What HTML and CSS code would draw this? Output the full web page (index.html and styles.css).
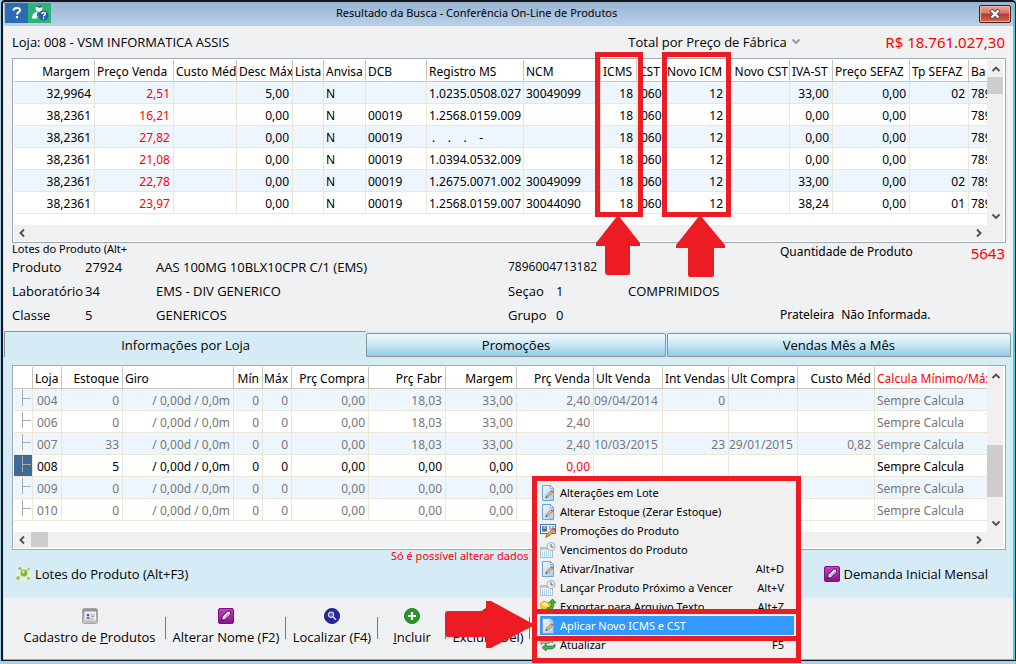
FILE: index.html
```html
<!DOCTYPE html>
<html lang="pt-BR">
<head>
<meta charset="utf-8">
<title>Resultado da Busca - Conferência On-Line de Produtos</title>
<link rel="stylesheet" href="styles.css">
</head>
<body>
<svg class="defs" aria-hidden="true">
  <defs>
    <linearGradient id="paper" x1="0" y1="0" x2="1" y2="1"><stop offset="0" stop-color="#f4faff"/><stop offset="1" stop-color="#9fcdf2"/></linearGradient>
    <linearGradient id="pink" x1="0" y1="0" x2="0" y2="1"><stop offset="0" stop-color="#c840c8"/><stop offset="1" stop-color="#8a128f"/></linearGradient>
    <linearGradient id="silver" x1="0" y1="0" x2="0" y2="1"><stop offset="0" stop-color="#8e8e8e"/><stop offset="1" stop-color="#c4c4c4"/></linearGradient>
  </defs>
  <symbol id="i-edit" viewBox="0 0 16 16">
    <path d="M2.500 .5h8l3 3v12h-11z" fill="url(#paper)" stroke="#6ea5d8"/>
    <path d="M10.500 .5v3h3z" fill="#fff" stroke="#6ea5d8" stroke-width=".8"/>
    <path d="M6 12.500l.8-2.500 4-4 1.700 1.700-4 4z" fill="#f0b878" stroke="#8a6238" stroke-width=".6"/>
    <path d="M10.800 6l1-1 1.700 1.700-1 1z" fill="#b06a5a"/><path d="M5.500 13l.6-1.800 1.200 1.200z" fill="#333"/>
  </symbol>
  <symbol id="i-promo" viewBox="0 0 16 16">
    <rect x=".5" y="1.500" width="15" height="9" fill="#eef6ff" stroke="#3b78b8"/>
    <rect x="2" y="3" width="5" height="5" fill="#4a7fc0"/><circle cx="4.500" cy="4.500" r="1.500" fill="#e8a35c"/>
    <path d="M2 8q2.500-3 5 0zM9 4h2M12 4h2M9 6h5" fill="#333" stroke="#3b78b8"/>
    <path d="M5.500 14.500l2-4 6-5 2 2-6 5z" fill="#f3a63b" stroke="#9b5a1c" stroke-width=".8"/><path d="M12.500 6l2-1.500 1.500 2-2 1.500z" fill="#d4505a"/>
  </symbol>
  <symbol id="i-cal" viewBox="0 0 16 16">
    <rect x=".5" y="5.500" width="12" height="10" fill="#f8fcff" stroke="#b3bfc8"/>
    <path d="M1 6h11v2h-11z" fill="#c0ccd4"/>
    <path d="M2 10h9M2 12h9M2 14h9" stroke="#62b8d0" stroke-dasharray="1 1"/>
    <circle cx="11" cy="4.500" r="4" fill="#eef2f4" stroke="#a3adb5"/><path d="M11 2v3h2.500" fill="none" stroke="#5c6973"/>
  </symbol>
  <symbol id="i-export" viewBox="0 0 16 16">
    <path d="M0 5l4-3 4 2 4 4-4 6-6-2z" fill="#f6c520" stroke="#c99508" stroke-width=".7"/><path d="M1 5l4-2 4 3-4 2z" fill="#fff08a"/>
    <path d="M7 9q5 0 4-5h-2.500l4-4 3.500 4h-2q0 8-7 8z" fill="#43b02a" stroke="#247a14" stroke-width=".7"/>
  </symbol>
  <symbol id="i-refresh" viewBox="0 0 16 16">
    <path d="M1 2v6l2-2q4 2 8-1l2 1V2l-4 0 1 1.500Q6 5.500 3 3z" fill="#9bcf9b" stroke="#3d8b4f" stroke-width=".8"/>
    <path d="M2 10.500l4-3.500v2h7l2-2v3l-3 2H6v2z" fill="#4caf58" stroke="#267338" stroke-width=".8"/>
  </symbol>
  <symbol id="i-tag" viewBox="0 0 16 16">
    <rect x=".5" y=".5" width="15" height="15" rx="1.500" fill="url(#pink)" stroke="#7b1180"/>
    <path d="M3.500 12.500l.8-4 5.500-5.500 2.700.2.200 2.800-5.700 5.500z" fill="#f3e6f3" stroke="#3f0a42" stroke-width=".9"/>
    <path d="M6.500 10l4.500-4.500" stroke="#9a7a9c" stroke-width=".9"/><path d="M3 13l.8-2.300 1.600 1.500z" fill="#222"/>
  </symbol>
  <symbol id="i-card" viewBox="0 0 16 16">
    <rect x=".5" y=".5" width="15" height="15" rx="2" fill="url(#silver)" stroke="#a5a5a5"/>
    <rect x="3" y="4" width="10.500" height="8" fill="#e8e8e8" stroke="#fff" stroke-width=".8"/>
    <circle cx="6" cy="7" r="1.300" fill="#2a62b8"/><path d="M4 10.500q2-3.500 4 0z" fill="#2a62b8"/><path d="M9 7h3.500M9 8.500h3.500M4 11h8" stroke="#888" stroke-width=".7"/>
  </symbol>
  <symbol id="i-find" viewBox="0 0 16 16">
    <circle cx="8" cy="8" r="7.600" fill="#25259c" stroke="#15156a" stroke-width=".8"/>
    <circle cx="7" cy="6.700" r="2.600" fill="#5a5ac0" stroke="#d8d8f4" stroke-width="1.200"/><path d="M9 8.700l3 3" stroke="#d8d8f4" stroke-width="1.600"/>
  </symbol>
  <symbol id="i-add" viewBox="0 0 16 16">
    <circle cx="8" cy="8" r="7.600" fill="#25962a" stroke="#1a7a20" stroke-width=".8"/><path d="M8 4v8M4 8h8" stroke="#fff" stroke-width="2.200"/>
  </symbol>
  <symbol id="i-del" viewBox="0 0 16 16">
    <circle cx="8" cy="8" r="7.600" fill="#b02020" stroke="#801414" stroke-width=".8"/><path d="M4 8h8" stroke="#fff" stroke-width="2.200"/>
  </symbol>
  <symbol id="i-lot" viewBox="0 0 16 16">
    <circle cx="8" cy="8" r="7.500" fill="#e9f3d8" opacity=".8"/><path d="M5 3l4 4 4-4M9 7l-6 5M9 7l4 5" stroke="#c3dba6" fill="none"/>
    <circle cx="9" cy="7" r="3.400" fill="#7cb738"/><circle cx="8.300" cy="6" r="1.400" fill="#d9efb5"/>
    <circle cx="5" cy="2.500" r="1.600" fill="#8fbf4c"/><circle cx="13.500" cy="3" r="1.200" fill="#9cc75c"/><circle cx="3" cy="12" r="1.800" fill="#8fbf4c"/><circle cx="13.500" cy="12.500" r="1.400" fill="#9cc75c"/>
  </symbol>
  <symbol id="i-up" viewBox="0 0 10 8"><path d="M1.500 6L5 2.500 8.500 6" fill="none" stroke="#505050" stroke-width="1.900"/></symbol>
  <symbol id="i-down" viewBox="0 0 10 8"><path d="M1.500 1.500L5 5l3.500-3.500" fill="none" stroke="#505050" stroke-width="1.900"/></symbol>
  <symbol id="i-left" viewBox="0 0 8 10"><path d="M5 1.500L1.500 5 5 8.500" fill="none" stroke="#505050" stroke-width="1.900"/></symbol>
  <symbol id="i-right" viewBox="0 0 8 10"><path d="M2 1.500L5.500 5 2 8.500" fill="none" stroke="#505050" stroke-width="1.900"/></symbol>
</svg>

<main class="window">
  <header class="titlebar">
    <div class="title-icons">
      <button class="help" aria-label="Ajuda">
        <svg width="10" height="14" viewBox="0 0 10 14"><path d="M1.500 4.500q0-2.500 3.300-2.500T8 4.300Q8 5.500 6.500 6.400 5 7.300 5 8.500" fill="none" stroke="#fff" stroke-width="2"/><rect x="3.900" y="10" width="2.200" height="2.200" fill="#fff"/></svg>
      </button>
      <button class="support" aria-label="Suporte">
        <svg width="18" height="16" viewBox="0 0 18 16"><circle cx="8" cy="3.500" r="3.300" fill="#fff"/><path d="M5 1.500q3 2 6 .5L10.500.5H6z" fill="#1c4f9c"/><path d="M1 13.500q0-6 5-6.500l2 1.500-2 5z" fill="#fff"/><path d="M6.500 7.500l2 .500-3 5z" fill="#1c4f9c"/><circle cx="12.500" cy="10.500" r="5" fill="#1f5fb0"/><path d="M10.800 9q0-1.500 1.800-1.500t1.700 1.400q0 .8-.9 1.300t-.8 1.300" fill="none" stroke="#fff" stroke-width="1.400"/><rect x="11.900" y="12.500" width="1.400" height="1.400" fill="#fff"/></svg>
      </button>
    </div>
    <h1>Resultado da Busca - Conferência On-Line de Produtos</h1>
    <button class="close" aria-label="Fechar">
      <svg width="12" height="10" viewBox="0 0 12 10"><path d="M2 1l8 8M10 1L2 9" stroke="#59484a" stroke-width="4.200"/><path d="M2.500 1.500l7 7M9.500 1.500l-7 7" stroke="#fff" stroke-width="2.400"/></svg>
    </button>
  </header>

  <section class="summary">
    <span class="store">Loja: 008 - VSM INFORMATICA ASSIS</span>
    <span class="picker">
      <select aria-label="Total"><option>Total por Preço de Fábrica</option></select>
      <svg width="10" height="8" viewBox="0 0 10 8"><path d="M1.500 1.500L5 5l3.500-3.500" fill="none" stroke="#999" stroke-width="1.900"/></svg>
    </span>
    <strong class="amount">R$ 18.761.027,30</strong>
  </section>

  <section class="grid">
    <div class="view">
      <table class="products">
        <colgroup><col class="w81"><col class="w79"><col class="w63"><col class="w56"><col class="w31"><col class="w42"><col class="w61"><col class="w97"><col class="w77"><col class="w36"><col class="w28"><col class="w62"><col class="w63"><col class="w43"><col class="w77"><col class="w59"><col></colgroup>
        <thead><tr><th class="n">Margem</th><th>Preço Venda</th><th>Custo Méd</th><th>Desc Máx</th><th>Lista</th><th>Anvisa</th><th>DCB</th><th>Registro MS</th><th>NCM</th><th>ICMS</th><th>CST</th><th>Novo ICM</th><th class="n">Novo CST</th><th>IVA-ST</th><th>Preço SEFAZ</th><th>Tp SEFAZ</th><th>Ba</th></tr></thead>
        <tbody>
          <tr><td class="n">32,9964</td><td class="n red">2,51</td><td></td><td class="n">5,00</td><td></td><td>N</td><td></td><td>1.0235.0508.027</td><td>30049099</td><td class="n">18</td><td>060</td><td class="n">12</td><td></td><td class="n">33,00</td><td class="n">0,00</td><td class="n">02</td><td>789</td></tr>
          <tr><td class="n">38,2361</td><td class="n red">16,21</td><td></td><td class="n">0,00</td><td></td><td>N</td><td>00019</td><td>1.2568.0159.009</td><td></td><td class="n">18</td><td>060</td><td class="n">12</td><td></td><td class="n">0,00</td><td class="n">0,00</td><td></td><td>789</td></tr>
          <tr><td class="n">38,2361</td><td class="n red">27,82</td><td></td><td class="n">0,00</td><td></td><td>N</td><td>00019</td><td class="mask"> .    .    .    -</td><td></td><td class="n">18</td><td>060</td><td class="n">12</td><td></td><td class="n">0,00</td><td class="n">0,00</td><td></td><td>789</td></tr>
          <tr><td class="n">38,2361</td><td class="n red">21,08</td><td></td><td class="n">0,00</td><td></td><td>N</td><td>00019</td><td>1.0394.0532.009</td><td></td><td class="n">18</td><td>060</td><td class="n">12</td><td></td><td class="n">0,00</td><td class="n">0,00</td><td></td><td>789</td></tr>
          <tr><td class="n">38,2361</td><td class="n red">22,78</td><td></td><td class="n">0,00</td><td></td><td>N</td><td>00019</td><td>1.2675.0071.002</td><td>30049099</td><td class="n">18</td><td>060</td><td class="n">12</td><td></td><td class="n">33,00</td><td class="n">0,00</td><td class="n">02</td><td>789</td></tr>
          <tr><td class="n">38,2361</td><td class="n red">23,97</td><td></td><td class="n">0,00</td><td></td><td>N</td><td>00019</td><td>1.2568.0159.007</td><td>30044090</td><td class="n">18</td><td>060</td><td class="n">12</td><td></td><td class="n">38,24</td><td class="n">0,00</td><td class="n">01</td><td>789</td></tr>
        </tbody>
      </table>
    </div>
    <div class="vbar"><button aria-label="Rolar para cima"><svg width="10" height="8"><use href="#i-up"/></svg></button><i class="thumb"></i><span class="fill"></span><button aria-label="Rolar para baixo"><svg width="10" height="8"><use href="#i-down"/></svg></button></div>
    <div class="hbar"><button aria-label="Rolar para a esquerda"><svg width="8" height="10"><use href="#i-left"/></svg></button><span class="fill"></span><button aria-label="Rolar para a direita"><svg width="8" height="10"><use href="#i-right"/></svg></button></div>
  </section>

  <section class="details">
    <div class="detail-main">
      <div class="hint">Lotes do Produto (Alt+</div>
      <div class="facts">
        <span>Produto</span><span>27924</span><span>AAS 100MG 10BLX10CPR C/1 (EMS)</span><span class="wide barcode">7896004713182</span>
        <span>Laboratório</span><span>34</span><span>EMS - DIV GENERICO</span><span>Seçao</span><span>1</span><span>COMPRIMIDOS</span>
        <span>Classe</span><span>5</span><span>GENERICOS</span><span>Grupo</span><span>0</span><span></span>
      </div>
    </div>
    <div class="detail-side">
      <div class="qty"><span>Quantidade de Produto</span><strong class="amount">5643</strong></div>
      <div class="shelf"><span>Prateleira</span><span>Não Informada.</span></div>
    </div>
  </section>

  <nav class="tabs" role="tablist">
    <button role="tab" aria-selected="true" class="tab active">Informações por Loja</button>
    <button role="tab" aria-selected="false" class="tab">Promoções</button>
    <button role="tab" aria-selected="false" class="tab tab-last">Vendas Mês a Mês</button>
  </nav>

  <section class="panel">
    <div class="grid">
      <div class="view">
        <table class="stores">
          <colgroup><col class="w19"><col class="w29"><col class="w61"><col class="w111"><col class="w29"><col class="w29"><col class="w77"><col class="w77"><col class="w71"><col class="w77"><col class="w69"><col class="w66"><col class="w69"><col class="w77"><col></colgroup>
          <thead><tr><th></th><th>Loja</th><th class="n">Estoque</th><th>Giro</th><th class="n">Mín</th><th class="n">Máx</th><th class="n">Prç Compra</th><th class="n">Prç Fabr</th><th class="n">Margem</th><th class="n">Prç Venda</th><th>Ult Venda</th><th class="n">Int Vendas</th><th>Ult Compra</th><th class="n">Custo Méd</th><th class="red">Calcula Mínimo/Máx</th></tr></thead>
          <tbody>
            <tr><td class="node"><i></i></td><td>004</td><td class="n">0</td><td class="n">/ 0,00d / 0,0m</td><td class="n">0</td><td class="n">0</td><td class="n">0,00</td><td class="n">18,03</td><td class="n">33,00</td><td class="n">2,40</td><td class="d">09/04/2014</td><td class="n">0</td><td></td><td></td><td>Sempre Calcula</td></tr>
            <tr><td class="node"><i></i></td><td>006</td><td class="n">0</td><td class="n">/ 0,00d / 0,0m</td><td class="n">0</td><td class="n">0</td><td class="n">0,00</td><td class="n">18,03</td><td class="n">33,00</td><td class="n">2,40</td><td></td><td></td><td></td><td></td><td>Sempre Calcula</td></tr>
            <tr><td class="node"><i></i></td><td>007</td><td class="n">33</td><td class="n">/ 0,00d / 0,0m</td><td class="n">0</td><td class="n">0</td><td class="n">0,00</td><td class="n">18,03</td><td class="n">33,00</td><td class="n">2,40</td><td class="d">10/03/2015</td><td class="n">23</td><td class="d">29/01/2015</td><td class="n">0,82</td><td>Sempre Calcula</td></tr>
            <tr class="current"><td class="node"><i></i></td><td>008</td><td class="n">5</td><td class="n">/ 0,00d / 0,0m</td><td class="n">0</td><td class="n">0</td><td class="n">0,00</td><td class="n">0,00</td><td class="n">0,00</td><td class="n red">0,00</td><td></td><td></td><td></td><td></td><td>Sempre Calcula</td></tr>
            <tr><td class="node"><i></i></td><td>009</td><td class="n">0</td><td class="n">/ 0,00d / 0,0m</td><td class="n">0</td><td class="n">0</td><td class="n">0,00</td><td class="n">0,00</td><td class="n">0,00</td><td></td><td></td><td></td><td></td><td></td><td>Sempre Calcula</td></tr>
            <tr><td class="node"><i></i></td><td>010</td><td class="n">0</td><td class="n">/ 0,00d / 0,0m</td><td class="n">0</td><td class="n">0</td><td class="n">0,00</td><td class="n">0,00</td><td class="n">0,00</td><td></td><td></td><td></td><td></td><td></td><td>Sempre Calcula</td></tr>
          </tbody>
        </table>
      </div>
      <div class="vbar"><button aria-label="Rolar para cima"><svg width="10" height="8"><use href="#i-up"/></svg></button><span class="fill"></span><i class="thumb tall"></i><span class="gap"></span><button aria-label="Rolar para baixo"><svg width="10" height="8"><use href="#i-down"/></svg></button></div>
      <div class="hbar"><button aria-label="Rolar para a esquerda"><svg width="8" height="10"><use href="#i-left"/></svg></button><i class="thumb"></i><span class="fill"></span><button aria-label="Rolar para a direita"><svg width="8" height="10"><use href="#i-right"/></svg></button></div>
    </div>
    <p class="warning">Só é possível alterar dados</p>
    <div class="links">
      <button><svg width="16" height="16"><use href="#i-lot"/></svg>Lotes do Produto (Alt+F3)</button>
      <button><svg width="16" height="16"><use href="#i-tag"/></svg>Demanda Inicial Mensal</button>
    </div>
  </section>

  <footer class="toolbar">
    <button class="b152"><svg width="16" height="16"><use href="#i-card"/></svg><span>Cadastro de <u>P</u>rodutos</span></button>
    <button class="b120"><svg width="16" height="16"><use href="#i-tag"/></svg><span>Alterar Nome (F2)</span></button>
    <button class="b92"><svg width="16" height="16"><use href="#i-find"/></svg><span>Localizar (F4)</span></button>
    <button class="b68"><svg width="16" height="16"><use href="#i-add"/></svg><span><u>I</u>ncluir</span></button>
    <button class="b84"><svg width="16" height="16"><use href="#i-del"/></svg><span>Excluir (Del)</span></button>
  </footer>
</main>

<div class="menu" role="menu">
  <button role="menuitem"><svg width="16" height="16"><use href="#i-edit"/></svg><span>Alterações em Lote</span></button>
  <button role="menuitem"><svg width="16" height="16"><use href="#i-edit"/></svg><span>Alterar Estoque (Zerar Estoque)</span></button>
  <button role="menuitem"><svg width="16" height="16"><use href="#i-promo"/></svg><span>Promoções do Produto</span></button>
  <button role="menuitem"><svg width="16" height="16"><use href="#i-cal"/></svg><span>Vencimentos do Produto</span></button>
  <button role="menuitem"><svg width="16" height="16"><use href="#i-edit"/></svg><span>Ativar/Inativar</span><kbd>Alt+D</kbd></button>
  <button role="menuitem"><svg width="16" height="16"><use href="#i-cal"/></svg><span>Lançar Produto Próximo a Vencer</span><kbd>Alt+V</kbd></button>
  <button role="menuitem"><svg width="16" height="16"><use href="#i-export"/></svg><span>Exportar para Arquivo Texto</span><kbd>Alt+Z</kbd></button>
  <button role="menuitem" class="selected"><svg width="16" height="16"><use href="#i-edit"/></svg><span>Aplicar Novo ICMS e CST</span></button>
  <button role="menuitem"><svg width="16" height="16"><use href="#i-refresh"/></svg><span>Atualizar</span><kbd>F5</kbd></button>
</div>

<div class="mark mark-icms"></div>
<div class="mark mark-novo"></div>
<div class="mark mark-item"></div>
<svg class="arrow arrow-icms" width="44" height="60" viewBox="0 0 44 60"><path d="M22 0L44 28v3H34v27q0 2-2 2H12q-3 0-3-3V31H0v-3z" fill="#ed1c24"/></svg>
<svg class="arrow arrow-novo" width="49" height="62" viewBox="0 0 49 62"><path d="M24 0L49 30v3H38v27q0 2-2 2H14q-2 0-2-2V33H0v-3z" fill="#ed1c24"/></svg>
<svg class="arrow arrow-item" width="90" height="47" viewBox="0 0 90 47"><path d="M3 10h38V0h5l44 24-44 23h-5V36H3q-3 0-3-3V13q0-3 3-3z" fill="#ed1c24"/></svg>
</body>
</html>
```
FILE: styles.css
```css
* { box-sizing: border-box; }
body {
  margin: 0;
  position: relative;
  padding: 0 0 2px 1px;
  background: #a9cfe8;
  color: #000;
  font: 12px/22px "Noto Sans", "Open Sans", sans-serif;
}
button, select { font: inherit; color: inherit; border: 0; padding: 0; margin: 0; background: none; }
svg { display: block; flex: none; }
.defs { position: absolute; width: 0; height: 0; }
.red { color: #ff0000; }

.window {
  border: 2px solid #14181c;
  border-right-width: 1px;
  border-bottom-width: 1px;
  border-radius: 4px 4px 0 0;
  background: #f0f1f3;
  box-shadow: inset -2px -1px 0 #3fd0e8, inset 1px 0 0 #cfe0ee;
  padding: 0 2px 1px 1px;
}

.titlebar {
  display: grid;
  grid-template-columns: 332px 1fr auto;
  height: 24px;
  background: linear-gradient(#99b4d1, #b9d1ea);
}
.titlebar h1 { margin: 0; font-size: 11px; line-height: 22px; font-weight: 400; white-space: nowrap; }
.title-icons { display: flex; padding: 1px 0 3px 1px; }
.title-icons button { display: flex; align-items: center; justify-content: center; width: 23px; height: 20px; }
.help { background: #2c6cb0; }
.support { background: #2fb573; }
.close {
  display: flex;
  align-items: center;
  justify-content: center;
  width: 32px;
  height: 18px;
  margin: 3px 2px 0 0;
  border: 1px solid #4e1716;
  border-radius: 2px;
  background: linear-gradient(#e6a698, #d2786a 45%, #b83a22 50%, #cf6a55);
  box-shadow: inset 0 0 0 1px #e8b5ab;
}

.summary { display: flex; align-items: center; height: 32px; padding: 0 8px; }
.store { flex: 1; }
.picker { display: flex; align-items: center; gap: 4px; margin-right: 84px; }
.picker select { appearance: none; height: 22px; outline: 0; }
.store, .picker, .facts, .links, .toolbar, .tabs { font-size: 13px; font-family: "Open Sans", "Noto Sans", sans-serif; }
.amount { font-size: 15px; font-weight: 400; color: #ff0000; }

.grid {
  display: grid;
  grid-template-columns: minmax(0, 1fr) 16px;
  margin: 0 7px 0 8px;
  padding: 1px 2px 1px 1px;
  border: 1px solid #a2a8b0;
  background: #fff;
}
.view { overflow: hidden; padding-bottom: 11px; }
table { width: 100%; table-layout: fixed; border-collapse: separate; border-spacing: 0; }
th, td {
  height: 22px;
  padding: 2px 3px 0 4px;
  border-right: 1px solid #ece6d6;
  border-bottom: 1px solid #ece6d6;
  overflow: hidden;
  white-space: nowrap;
  text-align: left;
  font-weight: 400;
  line-height: 19px;
}
th { padding: 2px 0 0 2px; border-color: #c9c5b8; }
th.n, td.n { text-align: right; }
th:last-child, td:last-child { border-right: 0; }
.products th.n { padding-right: 4px; }
.products th:nth-child(13) { padding-right: 1px; }
.products td:nth-child(6) { padding-left: 2px; }
.products td:nth-child(7) { padding-left: 2px; }
.products td:nth-child(8) { padding-left: 2px; padding-right: 0; }
.products td:nth-child(9) { padding-left: 2px; }
.products td:last-child { padding-left: 2px; padding-right: 0; }
tbody tr:nth-child(odd) { background: #edf6ff; }
.mask { white-space: pre; }
.stores td { color: #767676; }
.stores th.n { padding-right: 3px; padding-left: 0; }
.stores td.d { padding-left: 0; padding-right: 0; }
.stores th:last-child, .stores td:last-child { padding-left: 2px; padding-right: 0; }
.stores .current td { color: #000; background: #fff; }
.stores .current td.red { color: #ff0000; }
.stores .current td.node { background: #3b6b96; }
.stores td.node { padding: 1px 0 0 8px; vertical-align: top; }
.node i { display: block; width: 9px; height: 16px; border-left: 1px solid #aaa; background: linear-gradient(#aaa, #aaa) 0 8px / 9px 1px no-repeat; }
.w19 { width: 19px; } .w28 { width: 28px; } .w29 { width: 29px; } .w31 { width: 31px; }
.w36 { width: 36px; } .w42 { width: 42px; } .w43 { width: 43px; } .w56 { width: 56px; }
.w59 { width: 59px; } .w61 { width: 61px; } .w62 { width: 62px; } .w63 { width: 63px; } .w66 { width: 66px; }
.w69 { width: 69px; } .w71 { width: 71px; } .w77 { width: 77px; } .w79 { width: 79px; }
.w81 { width: 81px; } .w97 { width: 97px; } .w111 { width: 111px; }

.vbar, .hbar { display: flex; background: #f0f0f0; }
.vbar { flex-direction: column; }
.hbar { grid-column: 1 / -1; height: 16px; padding-right: 16px; }
.vbar button, .hbar button { display: flex; align-items: center; justify-content: center; width: 17px; height: 17px; }
.hbar button { height: 16px; }
.fill { flex: 1; }
.thumb { width: 16px; height: 17px; background: #cdcdcd; }
.hbar .thumb { width: 17px; height: 15px; }
.thumb.tall { height: 52px; }
.gap { height: 18px; }

.details { display: flex; justify-content: space-between; padding: 0 8px 4px; }
.hint { height: 12px; white-space: nowrap; font-size: 11px; line-height: 12px; }
.facts { display: grid; grid-template-columns: 73px 71px 352px 48px 72px 140px; line-height: 24px; white-space: nowrap; }
.wide { grid-column: span 3; }
.barcode { font-size: 12px; }
.detail-side { display: flex; flex-direction: column; justify-content: space-between; width: 225px; }
.qty { display: flex; justify-content: space-between; line-height: 18px; }
.qty .amount { line-height: 20px; }
.shelf { display: flex; gap: 7px; line-height: 24px; }

.tabs { display: grid; grid-template-columns: 362fr 299fr 347fr; height: 26px; background: #d5ecf6; }
.tab {
  margin-top: 2px;
  border: 1px solid #8b9399;
  border-radius: 2px 2px 0 0;
  background: linear-gradient(#f4fafd, #c9e6f3 50%, #8fcbe6);
  line-height: 22px;
}
.tab.active { margin-top: 0; border-width: 1px 0 0 1px; background: #d5ecf6; line-height: 24px; }
.tab-last { margin: 2px 2px 0 1px; }

.panel { background: #d5ecf6; padding: 8px 0 13px; }
.warning { margin: 0; padding-left: 387px; font-size: 11px; line-height: 12px; color: #ff0000; }
.links { display: flex; justify-content: space-between; padding: 0 25px 0 11px; }
.links button { display: flex; align-items: center; gap: 4px; height: 23px; }

.toolbar { display: flex; height: 61px; padding-left: 9px; white-space: nowrap; }
.toolbar button { display: flex; flex-direction: column; align-items: center; justify-content: flex-start; padding-top: 10px; line-height: 26px; background: linear-gradient(#777, #777) 100% 19px / 1px 22px no-repeat; }
.b152 { width: 153px; } .b120 { width: 120px; } .b92 { width: 92px; } .b68 { width: 68px; } .b84 { width: 84px; }

.menu {
  position: absolute;
  left: 532px;
  top: 476px;
  width: 269px;
  height: 187px;
  padding: 2px 2px 0 3px;
  border: 5px solid #ed1c24;
  background: #f0f0f0;
  font-size: 11px;
}
.menu button { display: flex; align-items: center; width: 100%; height: 19px; gap: 4px; text-align: left; white-space: nowrap; }
.menu span { flex: 1; }
.menu kbd { font: inherit; padding-right: 10px; }
.menu .selected { background: #3399ff; color: #fff; }

.mark { position: absolute; border: 5px solid #ed1c24; }
.mark-icms { left: 595px; top: 52px; width: 48px; height: 165px; }
.mark-novo { left: 662px; top: 52px; width: 69px; height: 165px; }
.mark-item { left: 532px; top: 609px; width: 269px; height: 32px; }
.arrow { position: absolute; }
.arrow-icms { left: 596px; top: 215px; }
.arrow-novo { left: 676px; top: 215px; }
.arrow-item { left: 445px; top: 601px; }
```
